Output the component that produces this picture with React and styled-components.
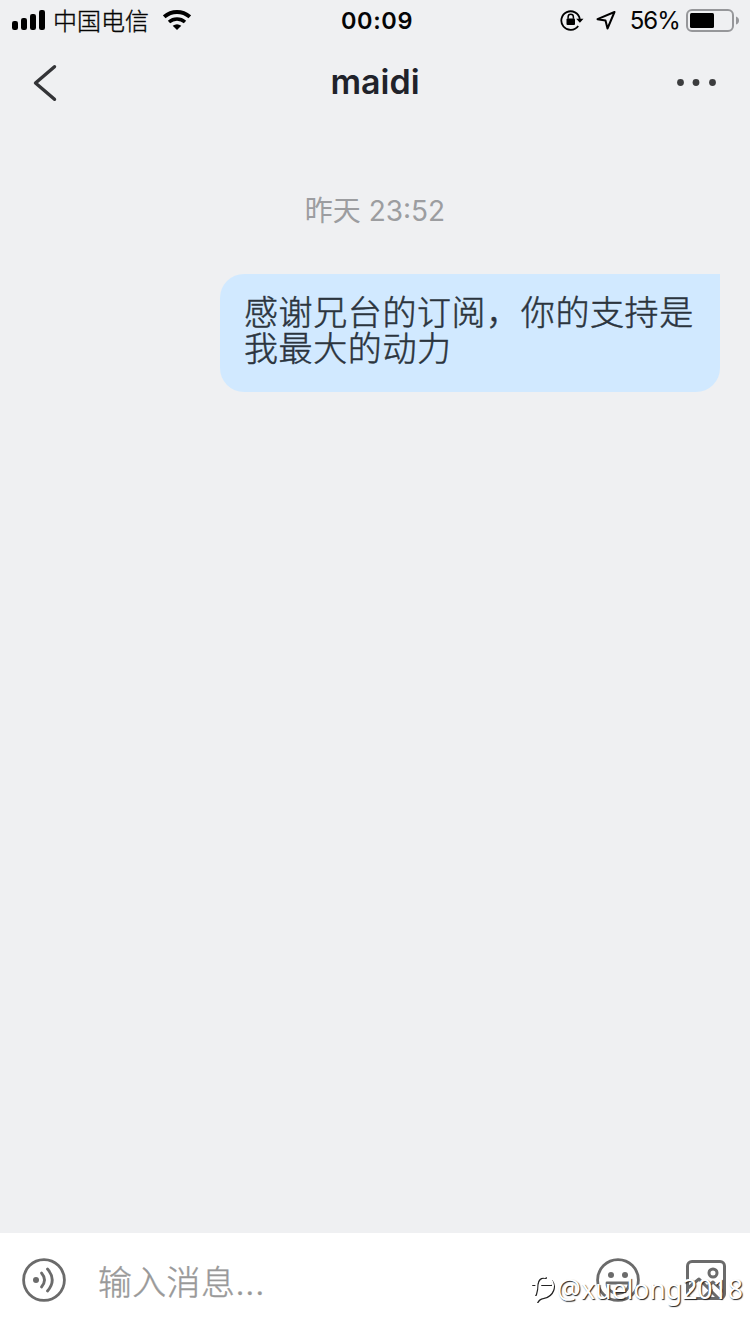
import React from 'react';
import styled, { createGlobalStyle } from 'styled-components';

const Global = createGlobalStyle`
  * { box-sizing: border-box; }
  body { margin: 0; background: #eff0f2; font-family: Inter, "Noto Sans CJK SC", sans-serif; }
  svg { display: block; flex: none; }
`;

const Screen = styled.main`
  position: relative;
  width: 750px;
  height: 1334px;
  display: flex;
  flex-direction: column;
  background: #eff0f2;
  overflow: hidden;
`;

const StatusBar = styled.header`
  height: 40px;
  display: grid;
  grid-template-columns: 1fr auto 1fr;
  align-items: center;
  padding: 0 10px 0 12px;
  color: #050505;
  font-size: 24px;
  line-height: 40px;
`;

const StatusGroup = styled.div`
  display: flex;
  align-items: center;
  justify-content: ${(p) => (p.$end ? 'flex-end' : 'flex-start')};
`;

const StatusIcons = styled.div`
  display: flex;
  align-items: center;
  gap: 12px;
`;

const Carrier = styled.span`
  margin: 0 14px 0 8px;
  padding-top: 3px;
  height: 40px;
  line-height: 38px;
  font-weight: 300;
  -webkit-text-stroke: 0.35px currentColor;
`;

const Clock = styled.time`
  padding: 2px 0 0 2px;
  line-height: 38px;
  font-weight: 600;
  letter-spacing: 0.6px;
  font-size: 23.5px;
`;

const Percent = styled.span`
  margin: 0 6px 0 14px;
  padding-top: 2px;
  line-height: 38px;
  font-size: 24px;
  letter-spacing: -0.9px;
`;

const NavBar = styled.nav`
  height: 88px;
  display: grid;
  grid-template-columns: 120px 1fr 120px;
  align-items: center;
  padding: 0 32px 2px;
`;

const NavButton = styled.button`
  border: 0;
  padding: 0;
  background: none;
  display: flex;
  justify-content: ${(p) => (p.$end ? 'flex-end' : 'flex-start')};
`;

const Title = styled.h1`
  margin: 0;
  padding-bottom: 2px;
  text-align: center;
  font-size: 34px;
  line-height: 40px;
  font-weight: 600;
  color: #20222a;
`;

const Messages = styled.section`
  flex: 1;
  display: flex;
  flex-direction: column;
  align-items: flex-end;
  padding: 63px 30px 0;
`;

const Stamp = styled.time`
  align-self: center;
  height: 40px;
  line-height: 40px;
  margin-bottom: 43px;
  font-size: 28px;
  color: #9c9da0;
`;

const Bubble = styled.p`
  margin: 0;
  width: 500px;
  height: 118px;
  padding: 21px 20px 0 24px;
  border-radius: 24px 0 24px 24px;
  background: #d1e9ff;
  color: #2b343d;
  font-size: 34px;
  font-weight: 300;
  -webkit-text-stroke: 0.5px currentColor;
  line-height: 36px;
  letter-spacing: 0.6px;
`;

const Composer = styled.footer`
  height: 101px;
  display: flex;
  align-items: center;
  padding: 0 24px 7px 22px;
  background: #fff;
`;

const Field = styled.div`
  flex: 1;
  margin-left: 32px;
  padding-top: 5px;
  font-size: 34px;
  font-weight: 300;
  -webkit-text-stroke: 0.4px currentColor;
  line-height: 44px;
  letter-spacing: 0.3px;
  color: #999;
`;

const Actions = styled.div`
  display: flex;
  align-items: center;
  gap: 46px;
`;

const Watermark = styled.div`
  position: absolute;
  right: 7px;
  bottom: 26px;
  display: flex;
  align-items: center;
  gap: 2px;
  color: #fff;
  font-family: "Noto Sans", sans-serif;
  font-size: 26.6px;
  line-height: 38px;
  text-shadow: 1px 1px 1px #222;
  svg { filter: drop-shadow(1px 1px 0.5px #222); }
`;

const Signal = () => (
  <svg width="33" height="20" viewBox="0 0 33 20" fill="#000">
    <rect x="0" y="11" width="6" height="9" rx="2.2" />
    <rect x="9" y="8" width="6" height="12" rx="2.2" />
    <rect x="18" y="4" width="6" height="16" rx="2.2" />
    <rect x="27" y="0" width="6" height="20" rx="2.2" />
  </svg>
);

const Wifi = () => (
  <svg width="28" height="20" viewBox="0 0 28 20" fill="none" stroke="#000">
    <path d="M1.200 6.800C8.700 .4 19.300 .4 26.800 6.800" strokeWidth="4" />
    <path d="M6 12C10.700 8 17.300 8 22 12" strokeWidth="3.600" />
    <path d="M9.700 15.800Q14 12.600 18.300 15.800L14 20Z" fill="#000" stroke="none" />
  </svg>
);

const RotationLock = () => (
  <svg width="24" height="22" viewBox="0 0 24 22" fill="none" stroke="#000" strokeWidth="1.800">
    <path d="M18.200 17A9.300 9.300 0 1 1 19.800 10" />
    <path d="M16.200 9.800H23.500L19.900 13.800Z" fill="#000" stroke="none" />
    <rect x="6.500" y="9.500" width="8.500" height="6.500" rx="1" fill="#000" stroke="none" />
    <path d="M8.100 9.800V8a2.650 2.650 0 0 1 5.300 0V9.800" strokeWidth="1.500" />
  </svg>
);

const LocationArrow = () => (
  <svg width="20" height="20" viewBox="0 0 20 20" fill="none" stroke="#000" strokeWidth="2" strokeLinejoin="round">
    <path d="M18.500 2L1.500 9.200L9.500 10.600L11.500 18.500Z" />
  </svg>
);

const Battery = () => (
  <svg width="54" height="24" viewBox="0 0 54 24">
    <rect x="1" y="2" width="46" height="21" rx="5" fill="none" stroke="#96979a" strokeWidth="2" />
    <rect x="4" y="5" width="24" height="15" rx="1.500" fill="#000" />
    <path d="M50 8.500Q53 9.500 53 12.500T50 16.500Z" fill="#96979a" />
  </svg>
);

const BackIcon = () => (
  <svg width="26" height="38" viewBox="0 0 26 38" fill="none" stroke="#333437" strokeWidth="3.400" strokeLinecap="round" strokeLinejoin="round">
    <path d="M22.500 2.700L3.500 19L22.500 35.300" />
  </svg>
);

const MoreIcon = () => (
  <svg width="42" height="10" viewBox="0 0 42 10" fill="#3b3c3e">
    <circle cx="4.500" cy="4.500" r="3.400" />
    <circle cx="20" cy="4.500" r="3.400" />
    <circle cx="36.500" cy="4.500" r="3.400" />
  </svg>
);

const VoiceIcon = () => (
  <svg width="44" height="44" viewBox="0 0 44 44" fill="none" stroke="#6b6b6b" strokeWidth="2.800" strokeLinecap="round">
    <circle cx="22" cy="22" r="20.400" />
    <circle cx="14" cy="22" r="3" fill="#6b6b6b" stroke="none" />
    <path d="M19.500 15Q25.500 22 19.500 29" />
    <path d="M25.500 11Q35 22 25.500 33" />
  </svg>
);

const SmileIcon = () => (
  <svg width="44" height="44" viewBox="0 0 44 44" fill="none" stroke="#6b6b6b" strokeWidth="2.800" strokeLinecap="round" strokeLinejoin="round">
    <circle cx="22" cy="22" r="20.400" />
    <circle cx="15" cy="17" r="3" fill="#6b6b6b" stroke="none" />
    <circle cx="29" cy="17" r="3" fill="#6b6b6b" stroke="none" />
    <path d="M11 25H33C33 39 11 39 11 25Z" />
  </svg>
);

const ImageIcon = () => (
  <svg width="40" height="40" viewBox="0 0 40 40" fill="none" stroke="#6b6b6b" strokeWidth="3" strokeLinejoin="round">
    <rect x="1.500" y="1.500" width="37" height="37" rx="4.500" />
    <circle cx="27" cy="13" r="4" />
    <path d="M2 28L13 19L32 38" />
    <path d="M21 27L27 22L38 32" />
    <path d="M17 38L26 29" />
  </svg>
);

const WatermarkIcon = () => (
  <svg width="24" height="28" viewBox="0 0 24 28" fill="none" stroke="#fff" strokeWidth="2" strokeLinecap="round">
    <path d="M14 2C9 1 6 4 5.500 9H1M5.500 9C5.500 13 5 16 4 19" />
    <path d="M10 9H20M20 5C24 10 22 20 12 22C9 22.500 7 23.500 6 26" />
  </svg>
);

export default function App() {
  return (
    <>
      <Global />
      <Screen>
        <StatusBar>
          <StatusGroup>
            <Signal />
            <Carrier>中国电信</Carrier>
            <Wifi />
          </StatusGroup>
          <Clock>00:09</Clock>
          <StatusGroup $end>
            <StatusIcons>
              <RotationLock />
              <LocationArrow />
            </StatusIcons>
            <Percent>56%</Percent>
            <Battery />
          </StatusGroup>
        </StatusBar>
        <NavBar>
          <NavButton aria-label="返回"><BackIcon /></NavButton>
          <Title>maidi</Title>
          <NavButton $end aria-label="更多"><MoreIcon /></NavButton>
        </NavBar>
        <Messages>
          <Stamp>昨天 23:52</Stamp>
          <Bubble>感谢兄台的订阅，你的支持是我最大的动力</Bubble>
        </Messages>
        <Composer>
          <VoiceIcon />
          <Field>输入消息...</Field>
          <Actions>
            <SmileIcon />
            <ImageIcon />
          </Actions>
        </Composer>
        <Watermark>
          <WatermarkIcon />
          <span>@xuelong2018</span>
        </Watermark>
      </Screen>
    </>
  );
}
